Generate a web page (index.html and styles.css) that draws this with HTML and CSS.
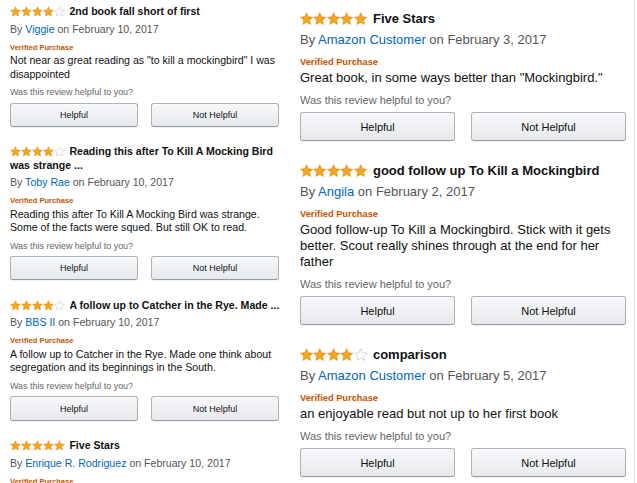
FILE: index.html
```html
<!DOCTYPE html>
<html lang="en">
<head>
  <meta charset="UTF-8">
  <meta name="viewport" content="width=device-width, initial-scale=1.0">
  <title>Customer Reviews</title>
  <link rel="stylesheet" href="styles.css">
</head>
<body>
  <svg class="defs" aria-hidden="true">
    <symbol id="star" viewBox="1.5 1.5 21 20">
      <path d="M12 2.6l2.8 6.2 6.8.7-5.1 4.6 1.5 6.7L12 17.3l-6 3.5 1.5-6.7-5.1-4.6 6.8-.7z"/>
    </symbol>
  </svg>

  <main class="page">
    <section class="column column-sm">
      <div class="review">
        <h3 class="review-title">
          <span class="stars">
            <svg class="star"><use href="#star"/></svg><svg class="star"><use href="#star"/></svg><svg class="star"><use href="#star"/></svg><svg class="star"><use href="#star"/></svg><svg class="star empty"><use href="#star"/></svg>
          </span>2nd book fall short of first
        </h3>
        <p class="byline">By <a href="#">Viggie</a> on February 10, 2017</p>
        <p class="verified">Verified Purchase</p>
        <p class="review-text">Not near as great reading as "to kill a mockingbird" I was disappointed</p>
        <p class="helpful-q">Was this review helpful to you?</p>
        <div class="vote">
          <button type="button">Helpful</button>
          <button type="button">Not Helpful</button>
        </div>
      </div>

      <div class="review">
        <h3 class="review-title">
          <span class="stars">
            <svg class="star"><use href="#star"/></svg><svg class="star"><use href="#star"/></svg><svg class="star"><use href="#star"/></svg><svg class="star"><use href="#star"/></svg><svg class="star empty"><use href="#star"/></svg>
          </span>Reading this after To Kill A Mocking Bird was strange ...
        </h3>
        <p class="byline">By <a href="#">Toby Rae</a> on February 10, 2017</p>
        <p class="verified">Verified Purchase</p>
        <p class="review-text">Reading this after To Kill A Mocking Bird was strange. Some of the facts were squed. But still OK to read.</p>
        <p class="helpful-q">Was this review helpful to you?</p>
        <div class="vote">
          <button type="button">Helpful</button>
          <button type="button">Not Helpful</button>
        </div>
      </div>

      <div class="review">
        <h3 class="review-title">
          <span class="stars">
            <svg class="star"><use href="#star"/></svg><svg class="star"><use href="#star"/></svg><svg class="star"><use href="#star"/></svg><svg class="star"><use href="#star"/></svg><svg class="star empty"><use href="#star"/></svg>
          </span>A follow up to Catcher in the Rye. Made ...
        </h3>
        <p class="byline">By <a href="#">BBS II</a> on February 10, 2017</p>
        <p class="verified">Verified Purchase</p>
        <p class="review-text">A follow up to Catcher in the Rye. Made one think about segregation and its beginnings in the South.</p>
        <p class="helpful-q">Was this review helpful to you?</p>
        <div class="vote">
          <button type="button">Helpful</button>
          <button type="button">Not Helpful</button>
        </div>
      </div>

      <div class="review">
        <h3 class="review-title">
          <span class="stars">
            <svg class="star"><use href="#star"/></svg><svg class="star"><use href="#star"/></svg><svg class="star"><use href="#star"/></svg><svg class="star"><use href="#star"/></svg><svg class="star"><use href="#star"/></svg>
          </span>Five Stars
        </h3>
        <p class="byline">By <a href="#">Enrique R. Rodriguez</a> on February 10, 2017</p>
        <p class="verified">Verified Purchase</p>
        <p class="review-text">Five stars.</p>
      </div>
    </section>

    <section class="column column-lg">
      <div class="review">
        <h3 class="review-title">
          <span class="stars">
            <svg class="star"><use href="#star"/></svg><svg class="star"><use href="#star"/></svg><svg class="star"><use href="#star"/></svg><svg class="star"><use href="#star"/></svg><svg class="star"><use href="#star"/></svg>
          </span>Five Stars
        </h3>
        <p class="byline">By <a href="#">Amazon Customer</a> on February 3, 2017</p>
        <p class="verified">Verified Purchase</p>
        <p class="review-text">Great book, in some ways better than "Mockingbird."</p>
        <p class="helpful-q">Was this review helpful to you?</p>
        <div class="vote">
          <button type="button">Helpful</button>
          <button type="button">Not Helpful</button>
        </div>
      </div>

      <div class="review">
        <h3 class="review-title">
          <span class="stars">
            <svg class="star"><use href="#star"/></svg><svg class="star"><use href="#star"/></svg><svg class="star"><use href="#star"/></svg><svg class="star"><use href="#star"/></svg><svg class="star"><use href="#star"/></svg>
          </span>good follow up To Kill a Mockingbird
        </h3>
        <p class="byline">By <a href="#">Angila</a> on February 2, 2017</p>
        <p class="verified">Verified Purchase</p>
        <p class="review-text">Good follow-up To Kill a Mockingbird. Stick with it gets better. Scout really shines through at the end for her father</p>
        <p class="helpful-q">Was this review helpful to you?</p>
        <div class="vote">
          <button type="button">Helpful</button>
          <button type="button">Not Helpful</button>
        </div>
      </div>

      <div class="review">
        <h3 class="review-title">
          <span class="stars">
            <svg class="star"><use href="#star"/></svg><svg class="star"><use href="#star"/></svg><svg class="star"><use href="#star"/></svg><svg class="star"><use href="#star"/></svg><svg class="star empty"><use href="#star"/></svg>
          </span>comparison
        </h3>
        <p class="byline">By <a href="#">Amazon Customer</a> on February 5, 2017</p>
        <p class="verified">Verified Purchase</p>
        <p class="review-text">an enjoyable read but not up to her first book</p>
        <p class="helpful-q">Was this review helpful to you?</p>
        <div class="vote">
          <button type="button">Helpful</button>
          <button type="button">Not Helpful</button>
        </div>
      </div>
    </section>
  </main>
</body>
</html>
```

FILE: styles.css
```css
body {
  margin: 0;
  font-family: "Liberation Sans", Arial, sans-serif;
  color: #111;
  background-color: #fff;
  overflow: hidden;
}
.defs { display: block; width: 0; height: 0; }
.page { display: flex; align-items: stretch; min-height: 100vh; }

/* both columns share the same rules, the left one is just scaled down
   --u scales type, --v scales the vertical rhythm */
.column-sm { --u: 0.815px; --v: 0.835px; width: 269px; padding: 5px 0 0 10px; }
.column-lg {
  --u: 1px;
  --v: 1px;
  width: 326px;
  margin-left: 21px;
  padding: 11px 8px 0 0;
  border-right: 1px solid #e4e4e4;
}

.review { margin-bottom: calc(22 * var(--v)); }
.review p { margin: 0; }

.review-title {
  margin: 0 calc(-8 * var(--u)) 0 0;
  font-size: calc(13 * var(--u));
  line-height: calc(16 * var(--v));
  font-weight: bold;
  color: #111;
}
.stars { display: inline-flex; margin-right: calc(6 * var(--u)); vertical-align: calc(-2 * var(--u)); }
.star {
  width: calc(13.4 * var(--u));
  height: calc(13 * var(--u));
  fill: #f3a81e;
  stroke: #dc7f10;
  stroke-width: 0.9;
  stroke-linejoin: round;
}
.star.empty { fill: #fff; stroke: #b9b9b9; }

.review .byline {
  margin-top: calc(5 * var(--v));
  font-size: calc(13 * var(--u));
  line-height: calc(16 * var(--v));
  color: #555;
}
.byline a { color: #0066c0; text-decoration: none; }

.review .verified {
  margin-top: calc(8 * var(--v));
  font-size: calc(9.3 * var(--u));
  line-height: calc(12 * var(--v));
  font-weight: bold;
  color: #c45500;
}
.review .review-text {
  margin-top: calc(2 * var(--v));
  font-size: calc(13 * var(--u));
  line-height: calc(16 * var(--v));
  color: #111;
}
.review .helpful-q {
  margin-top: calc(6 * var(--v));
  font-size: calc(11 * var(--u));
  line-height: calc(16 * var(--v));
  color: #666;
}

.vote {
  display: grid;
  grid-template-columns: 1fr 1fr;
  gap: calc(16 * var(--u));
  margin-top: calc(4 * var(--v));
}
.vote button {
  height: calc(29 * var(--v));
  padding: 0;
  font-family: inherit;
  font-size: calc(11 * var(--u));
  color: #111;
  background: linear-gradient(#f7f8fa, #e7e9ec);
  border: 1px solid #adb1b8;
  border-bottom-color: #949aa3;
  border-radius: 3px;
  box-shadow: inset 0 1px 0 rgba(255, 255, 255, 0.6), 0 1px 0 rgba(0, 0, 0, 0.05);
  cursor: pointer;
}
```
